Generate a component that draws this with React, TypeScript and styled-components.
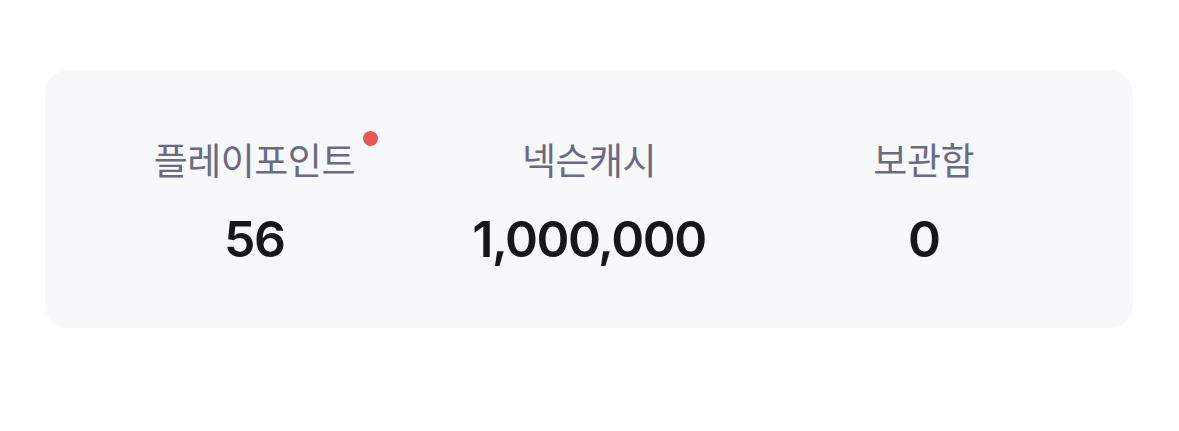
import React from "react";
import styled, {createGlobalStyle} from "styled-components";

const GlobalStyle = createGlobalStyle`
  html, body {
    margin: 0;
    padding: 0;
    background: #ffffff;
  }
`;

type Stat = {label: string; value: string; badge?: boolean};

const stats: Stat[] = [
    {label: "플레이포인트", value: "56", badge: true},
    {label: "넥슨캐시", value: "1,000,000"},
    {label: "보관함", value: "0"},
];

export default function App() {
    return (
        <Page>
            <GlobalStyle />
            <Card>
                {stats.map(s => (
                    <Column key={s.label}>
                        <Label>
                            {s.label}
                            {s.badge && <Dot />}
                        </Label>
                        <Value>{s.value}</Value>
                    </Column>
                ))}
            </Card>
        </Page>
    );
}

const Page = styled.div`
  width: 1179px;
  height: 431px;
  padding: 70px 45px 0 45px;
  box-sizing: border-box;
`;

const Card = styled.div`
  display: grid;
  grid-template-columns: repeat(3, 1fr);
  width: 1088px;
  height: 258px;
  box-sizing: border-box;
  padding: 6px 42px 0;
  background: #f7f8fa;
  border-radius: 24px;
  align-items: center;
`;

const Column = styled.div`
  display: flex;
  flex-direction: column;
  align-items: center;
  gap: 30px;
`;

const Label = styled.div`
  position: relative;
  font-family: "Noto Sans CJK KR", "Noto Sans", sans-serif;
  font-size: 37px;
  line-height: 44px;
  font-weight: 400;
  color: #6b6a85;
  letter-spacing: -0.5px;
`;

const Dot = styled.span`
  position: absolute;
  top: -6px;
  right: -23px;
  width: 15px;
  height: 15px;
  border-radius: 50%;
  background: #e85656;
`;

const Value = styled.div`
  font-family: Inter, "Noto Sans", sans-serif;
  font-size: 50px;
  line-height: 56px;
  font-weight: 600;
  color: #17171a;
  letter-spacing: -1.5px;
`;
